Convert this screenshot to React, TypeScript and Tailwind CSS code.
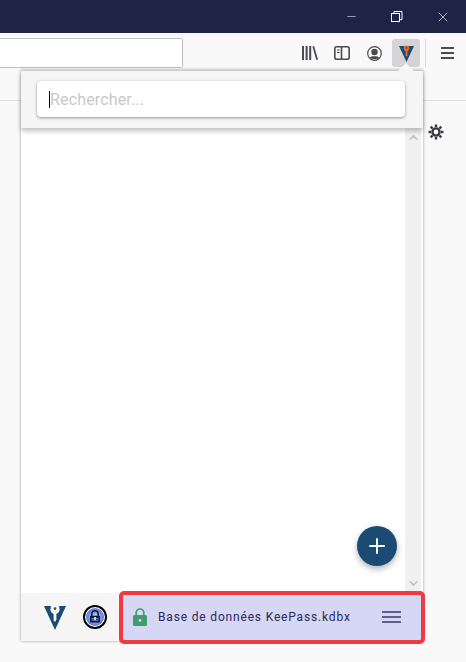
import { Plus, Minus, X, ChevronUp, ChevronDown } from 'lucide-react';

function VaultLogo() {
  return (
    <svg width="22" height="25" viewBox="0 0 22 25">
      <path d="M0 1H22L11 25Z" fill="#1b4a72" />
      <circle cx="11" cy="4.5" r="4.6" fill="#f5f5f5" />
      <rect x="6.8" y="0" width="8.4" height="3" fill="#f5f5f5" />
      <path d="M9.6 7H12.4V14.5L11 17L9.6 15.5Z" fill="#f5f5f5" />
      <circle cx="11" cy="3.6" r="1.3" fill="#1b4a72" />
    </svg>
  );
}

function LockIcon() {
  return (
    <div className="w-[24px] h-[24px] rounded-full border-2 border-black bg-white flex items-center justify-center">
      <svg width="18" height="18" viewBox="0 0 20 20">
        <defs>
          <radialGradient id="lockbg" cx="50%" cy="50%" r="55%">
            <stop offset="0%" stopColor="#c5d0ff" />
            <stop offset="100%" stopColor="#4f6fe0" />
          </radialGradient>
        </defs>
        <circle cx="10" cy="10" r="10" fill="url(#lockbg)" />
        <path d="M6.5 9V6.5a3.5 3.5 0 0 1 7 0V9" fill="none" stroke="#10142c" strokeWidth="1.6" />
        <rect x="4.5" y="8.5" width="11" height="7.5" rx="0.8" fill="#10142c" />
        <rect x="6" y="11" width="8" height="1" fill="#8ea2ee" />
        <rect x="6" y="13" width="8" height="1" fill="#8ea2ee" />
        <rect x="9" y="10" width="2" height="3.5" fill="#dfe5ff" />
      </svg>
    </div>
  );
}

function GreenLock() {
  return (
    <svg width="14" height="18" viewBox="0 0 14 18">
      <path d="M3.2 8V4.8a3.8 3.8 0 0 1 7.6 0V8" fill="none" stroke="#3f9c6b" strokeWidth="1.7" />
      <rect x="0" y="7" width="14" height="11" rx="1.5" fill="#3f9c6b" />
      <circle cx="7" cy="12.5" r="1.4" fill="#d6d6f5" />
    </svg>
  );
}

function GearIcon() {
  return (
    <svg width="16" height="16" viewBox="0 0 16 16" fill="none" stroke="#38383d">
      <circle cx="8" cy="8" r="3.6" strokeWidth="2.4" />
      <path
        d="M8 0.5V3M8 13V15.5M0.5 8H3M13 8H15.5M2.7 2.7L4.5 4.5M11.5 11.5L13.3 13.3M13.3 2.7L11.5 4.5M4.5 11.5L2.7 13.3"
        strokeWidth="2.4"
      />
    </svg>
  );
}

export default function App() {
  return (
    <div className="relative w-[466px] h-[662px] overflow-hidden bg-[#f9f9fa] font-['Roboto',sans-serif]">
      {/* Title bar */}
      <div className="h-[33px] bg-[#1f2447] flex items-center justify-end text-white">
        <div className="w-[46px] flex justify-center"><Minus size={13} strokeWidth={1} /></div>
        <div className="w-[46px] flex justify-center">
          <svg width="12" height="12" viewBox="0 0 12 12" fill="none" stroke="#fff">
            <rect x="0.5" y="2.5" width="8" height="8" />
            <path d="M3 2.5V0.5H11V8.5H8.5" />
          </svg>
        </div>
        <div className="w-[46px] flex justify-center"><X size={16} strokeWidth={1} /></div>
      </div>

      {/* Toolbar */}
      <div className="h-[68px] border-b border-[#e0e0e2] flex items-start">
        <div className="w-[183px] h-[30px] mt-[5px] bg-white border border-[#c0c0c0] rounded-r-[2px] border-l-0" />
        <div className="flex-1 flex items-center justify-end h-[28px] mt-[6px] text-[#4a4a4f]">
          <svg width="16" height="14" viewBox="0 0 16 14" className="mr-[16px]" fill="#4a4a4f">
            <rect x="0" y="0" width="2" height="14" />
            <rect x="3.6" y="0" width="2" height="14" />
            <rect x="7.2" y="0" width="2" height="14" />
            <path d="M10.4 0.5L12.1 0L16 13.5L14.3 14Z" />
          </svg>
          <svg width="16" height="14" viewBox="0 0 16 14" className="mr-[17px]" fill="none" stroke="#4a4a4f" strokeWidth="1.6">
            <rect x="0.8" y="0.8" width="14.4" height="12.4" rx="2" />
            <path d="M7.5 1V13" />
            <path d="M3 4H5.5M3 6.5H5.5" strokeWidth="1.2" />
          </svg>
          <svg width="15" height="15" viewBox="0 0 15 15" className="mr-[10px]">
            <circle cx="7.5" cy="7.5" r="6.8" fill="none" stroke="#4a4a4f" strokeWidth="1.2" />
            <circle cx="7.5" cy="6" r="3.2" fill="#4a4a4f" />
            <path d="M2.8 11.5C4 9.8 11 9.8 12.2 11.5C11 13.5 4 13.5 2.8 11.5Z" fill="#4a4a4f" />
          </svg>
          <div className="w-[28px] h-[28px] rounded-[3px] bg-[#d4d4d6] flex items-center justify-center">
            <svg width="15" height="17" viewBox="0 0 16 18">
              <path d="M0 1H16L8 18Z" fill="#1b4a72" />
              <circle cx="8" cy="3.5" r="3" fill="#ef6c1f" />
              <rect x="7" y="4" width="2" height="8" fill="#ef6c1f" />
              <circle cx="8" cy="3" r="0.9" fill="#1b4a72" />
            </svg>
          </div>
          <div className="w-px h-[28px] bg-[#dcdcde] ml-[5px] mr-[15px]" />
          <div className="w-[13px] flex flex-col gap-[3px] mr-[12px]">
            <div className="h-[2px] bg-[#4a4a4f]" />
            <div className="h-[2px] bg-[#4a4a4f]" />
            <div className="h-[2px] bg-[#4a4a4f]" />
          </div>
        </div>
      </div>

      {/* Page content behind the panel */}
      <div className="flex justify-end pt-[23px] pr-[22px]">
        <GearIcon />
      </div>

      {/* Popup arrow */}
      <div className="absolute z-10 left-[398px] top-[63px] w-0 h-0 border-x-[8px] border-x-transparent border-b-[8px] border-b-[#f8f8f8]" />

      {/* Popup panel */}
      <div className="absolute left-[21px] top-[70px] w-[402px] h-[571px] flex flex-col bg-white border-t border-[#d0d0d0] shadow-[0_0_3px_rgba(0,0,0,0.35)]">
        <div className="relative z-10 h-[57px] shrink-0 bg-[#f5f5f5] px-[16px] pt-[10px] shadow-[0_3px_5px_rgba(0,0,0,0.25)]">
          <div className="h-[36px] w-[368px] bg-white rounded-[4px] shadow-[0_1px_3px_rgba(0,0,0,0.4)] flex items-center pl-[12px]">
            <div className="w-px h-[17px] bg-black" />
            <span className="text-[16px] tracking-[0.15px] text-[#c8c8c8] pt-[1px]">Rechercher...</span>
          </div>
        </div>

        <div className="flex-1 flex min-h-0">
          <div className="flex-1 bg-white flex flex-col justify-end items-end pr-[8px] pb-[27px]">
            <div className="w-[40px] h-[40px] rounded-full bg-[#1b4a72] text-white flex items-center justify-center shadow-[0_3px_6px_rgba(0,0,0,0.3)]">
              <Plus size={24} strokeWidth={2} />
            </div>
          </div>
          <div className="w-[16px] bg-[#f0f0f0] flex flex-col justify-between items-center py-[3px] text-[#c4c4c4] mr-[2px]">
            <ChevronUp size={13} strokeWidth={3} />
            <ChevronDown size={13} strokeWidth={3} />
          </div>
        </div>

        <div className="h-[48px] shrink-0 bg-[#f5f5f5] flex items-center">
          <div className="ml-[23px]"><VaultLogo /></div>
          <div className="ml-[17px]"><LockIcon /></div>
        </div>
      </div>

      {/* Red highlight over the footer */}
      <div className="absolute left-[119px] top-[591px] w-[306px] h-[53px] border-[4px] border-[#ef3b40] rounded-[5px] bg-[#d6d6f5] flex items-center pl-[10px] pr-[20px] pb-[1px]">
        <GreenLock />
        <span className="ml-[11px] text-[12px] tracking-[0.83px] text-[#2b2a5a] flex-1">Base de données KeePass.kdbx</span>
        <div className="w-[19px] flex flex-col gap-[3px]">
          <div className="h-[2px] bg-[#62608a]" />
          <div className="h-[2px] bg-[#62608a]" />
          <div className="h-[2px] bg-[#62608a]" />
        </div>
      </div>
    </div>
  );
}
